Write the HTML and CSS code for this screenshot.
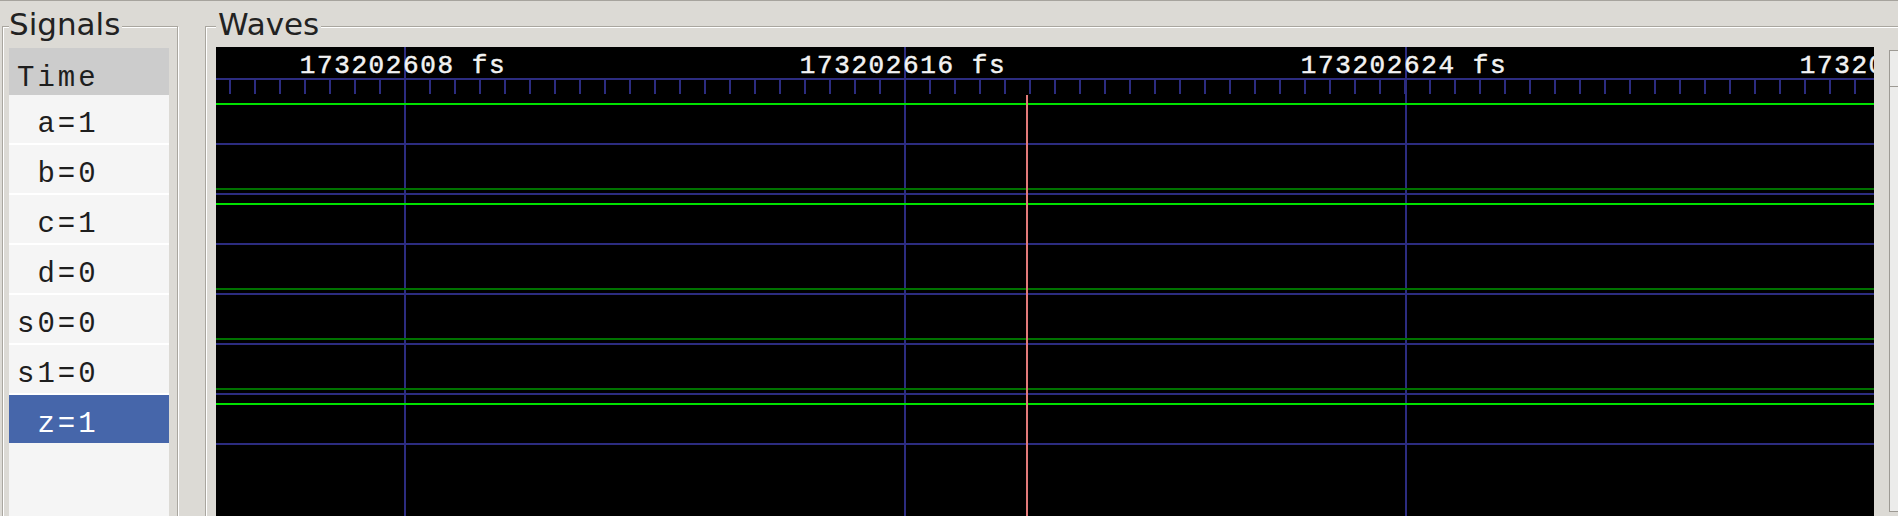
FILE: index.html
```html
<!DOCTYPE html>
<html>
<head>
<meta charset="utf-8">
<link rel="stylesheet" href="styles.css">
</head>
<body>
<div class="app">
  <fieldset class="frame signals">
    <legend>Signals</legend>
    <div class="list">
      <div class="row head">Time</div>
      <div class="row"> a=1</div>
      <div class="row"> b=0</div>
      <div class="row"> c=1</div>
      <div class="row"> d=0</div>
      <div class="row">s0=0</div>
      <div class="row">s1=0</div>
      <div class="row sel"> z=1</div>
    </div>
  </fieldset>
  <fieldset class="frame waves">
    <legend>Waves</legend>
    <div class="waves-body">
      <div class="canvas">
        <svg width="1658" height="475" viewBox="0 0 1658 475" xmlns="http://www.w3.org/2000/svg">
          <g class="grid">
            <rect x="188" y="0" width="2" height="475"/>
            <rect x="688" y="0" width="2" height="475"/>
            <rect x="1189" y="0" width="2" height="475"/>
          </g>
          <rect class="ruler" x="0" y="31" width="1658" height="2"/>
          <g class="ticks" id="ticks"></g>
          <g class="labels">
            <text x="187" y="26">173202608 fs</text>
            <text x="687" y="26">173202616 fs</text>
            <text x="1188" y="26">173202624 fs</text>
            <text x="1687" y="26">173202632 fs</text>
          </g>
          <g class="sep">
            <rect x="0" y="96" width="1658" height="2"/>
            <rect x="0" y="146" width="1658" height="2"/>
            <rect x="0" y="196" width="1658" height="2"/>
            <rect x="0" y="246" width="1658" height="2"/>
            <rect x="0" y="296" width="1658" height="2"/>
            <rect x="0" y="346" width="1658" height="2"/>
            <rect x="0" y="396" width="1658" height="2"/>
          </g>
          <g class="high">
            <rect x="0" y="56" width="1658" height="2"/>
            <rect x="0" y="156" width="1658" height="2"/>
            <rect x="0" y="356" width="1658" height="2"/>
          </g>
          <g class="low">
            <rect x="0" y="141" width="1658" height="2"/>
            <rect x="0" y="241" width="1658" height="2"/>
            <rect x="0" y="291" width="1658" height="2"/>
            <rect x="0" y="341" width="1658" height="2"/>
          </g>
          <rect class="cursor" x="810" y="48" width="2" height="427"/>
        </svg>
      </div>
      <div class="vscroll"><div class="arrow"></div></div>
    </div>
  </fieldset>
</div>
<script>
  (function () {
    var g = document.getElementById('ticks');
    var ns = 'http://www.w3.org/2000/svg';
    for (var k = 0; k < 66; k++) {
      var r = document.createElementNS(ns, 'rect');
      r.setAttribute('x', 13 + 25 * k);
      r.setAttribute('y', 31);
      r.setAttribute('width', 2);
      r.setAttribute('height', 16);
      g.appendChild(r);
    }
  })();
</script>
</body>
</html>
```

FILE: styles.css
```css
html {
  overflow: hidden;
  background: #dcdad5;
}
body {
  margin: 0;
  height: 515px;
  border-top: 1px solid #a6a39d;
  background: #dcdad5;
  overflow: hidden;
  font-family: "DejaVu Sans", sans-serif;
}
.app {
  display: flex;
  align-items: flex-start;
  padding-left: 2px;
}
.frame {
  flex: none;
  margin: 5px 0 0;
  border: 1px solid #a9a69f;
  box-shadow: inset 1px 1px 0 #ffffff, 1px 1px 0 #ffffff;
  height: 530px;
  min-width: 0;
  box-sizing: border-box;
}
.frame legend {
  font-size: 31px;
  line-height: normal;
  color: #222;
  background: #dcdad5;
  padding: 0 2px 5px;
}
.signals legend {
  padding-left: 0;
}
.signals {
  width: 176px;
  padding: 1px 8px 0 6px;
}
.waves {
  margin-left: 27px;
  width: 1720px;
  padding: 0 0 0 10px;
}
.list {
  background: #f5f5f5;
  height: 480px;
  font-family: "Liberation Mono", "DejaVu Sans Mono", monospace;
  font-size: 29px;
  letter-spacing: 3px;
  color: #1e1e1e;
}
.row {
  height: 50px;
  box-sizing: border-box;
  border-bottom: 2px solid #ffffff;
  padding: 13px 0 0 8px;
  line-height: 34px;
  white-space: pre;
}
.row.head {
  height: 47px;
  padding-top: 14px;
  border-bottom: 0;
  background: #cccccc;
}
.row.sel {
  background: #4666aa;
  color: #ffffff;
  border-bottom-color: #f5f5f5;
}
.waves-body {
  display: flex;
  align-items: flex-start;
  gap: 15px;
}
.canvas {
  flex: none;
  width: 1658px;
  height: 475px;
  background: #000;
  overflow: hidden;
}
.canvas svg {
  display: block;
}
.grid rect,
.ruler,
.ticks rect,
.sep rect {
  fill: #2c2c80;
}
.high rect {
  fill: #00e000;
}
.low rect {
  fill: #007200;
}
.cursor {
  fill: #e27a7a;
}
.labels text {
  font-family: "Liberation Mono", "DejaVu Sans Mono", monospace;
  font-size: 26px;
  font-weight: normal;
  letter-spacing: 1.6px;
  fill: #f2f2f2;
  stroke: #f2f2f2;
  stroke-width: 0.5px;
  text-anchor: middle;
}
.vscroll {
  flex: none;
  width: 30px;
  height: 460px;
  margin-top: 3px;
  border: 1px solid #9d9a94;
  background: #ececeb;
}
.vscroll .arrow {
  height: 35px;
  border-bottom: 1px solid #9d9a94;
}
```
